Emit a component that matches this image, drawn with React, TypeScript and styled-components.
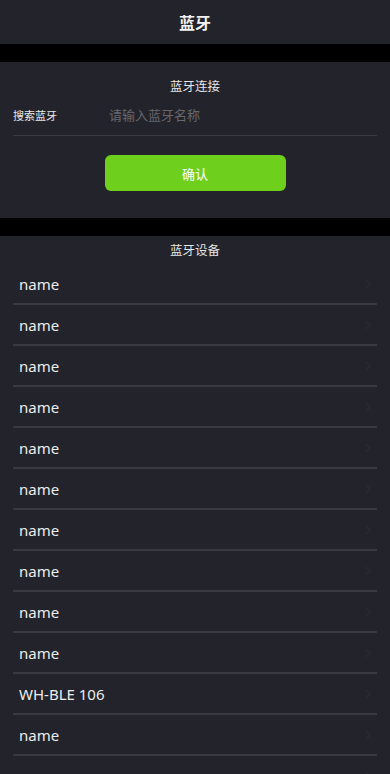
import React from 'react';
import styled, { createGlobalStyle } from 'styled-components';

const GlobalStyle = createGlobalStyle`
  html, body {
    margin: 0;
    padding: 0;
    background: #000;
  }
  body {
    font-family: "Noto Sans", "Noto Sans CJK SC", sans-serif;
    -webkit-font-smoothing: antialiased;
  }
`;

const Page = styled.div`
  width: 390px;
  height: 774px;
  overflow: hidden;
  background: #000;
  display: flex;
  flex-direction: column;
  gap: 18px;
`;

const Header = styled.header`
  height: 44px;
  flex-shrink: 0;
  background: #23242b;
  display: flex;
  align-items: center;
  justify-content: center;
  color: #f2f2f2;
  font-size: 16px;
  font-weight: 700;
  font-family: "Noto Sans CJK SC", sans-serif;
`;

const Panel = styled.section`
  background: #23242b;
  display: flex;
  flex-direction: column;
  padding: ${(p: { pad?: string }) => p.pad ?? '0'};
`;

const PanelTitle = styled.div`
  font-family: "Noto Sans CJK SC", sans-serif;
  font-size: 12.5px;
  color: #e6e6e6;
  text-align: center;
  line-height: ${(p: { lh?: string }) => p.lh ?? '16px'};
`;

const SearchRow = styled.label`
  margin: 0 13px;
  height: 41px;
  display: flex;
  align-items: center;
  border-bottom: 1.5px solid #3a3b42;
`;

const FieldLabel = styled.span`
  width: 96px;
  font-family: "Noto Sans CJK SC", sans-serif;
  font-size: 11px;
  color: #e8e8e8;
`;

const FieldInput = styled.input`
  flex: 1;
  border: none;
  outline: none;
  background: transparent;
  font-family: "Noto Sans CJK SC", sans-serif;
  font-size: 13px;
  color: #eee;
  padding: 0;
  &::placeholder {
    color: #66676e;
  }
`;

const ConfirmButton = styled.button`
  align-self: center;
  margin-top: 19px;
  width: 181px;
  height: 36px;
  border: none;
  border-radius: 6px;
  background: #6fcf1d;
  color: #eef8e6;
  font-family: "Noto Sans CJK SC", sans-serif;
  font-size: 13px;
  font-weight: 500;
`;

const DeviceList = styled.ul`
  list-style: none;
  margin: 0;
  padding: 0 13px;
`;

const DeviceItem = styled.li`
  height: 39px;
  display: flex;
  align-items: center;
  justify-content: space-between;
  border-bottom: 2px solid #393a41;
  padding-left: 6px;
  font-size: 15px;
  color: #ececec;
`;

const Chevron = () => (
  <svg width="6" height="10" viewBox="0 0 6 10" style={{ marginRight: 6 }}>
    <path d="M1 1l4 4-4 4" fill="none" stroke="#2a2b32" strokeWidth="1.4" />
  </svg>
);

const devices = [
  'name', 'name', 'name', 'name', 'name', 'name', 'name', 'name',
  'name', 'name', 'WH-BLE 106', 'name', 'name',
];

export default function App() {
  return (
    <>
      <GlobalStyle />
      <Page>
        <Header>蓝牙</Header>
        <Panel pad="16px 0 27px">
          <PanelTitle>蓝牙连接</PanelTitle>
          <SearchRow>
            <FieldLabel>搜索蓝牙</FieldLabel>
            <FieldInput placeholder="请输入蓝牙名称" />
          </SearchRow>
          <ConfirmButton>确认</ConfirmButton>
        </Panel>
        <Panel>
          <PanelTitle lh="28px">蓝牙设备</PanelTitle>
          <DeviceList>
            {devices.map((d, i) => (
              <DeviceItem key={i}>
                {d}
                <Chevron />
              </DeviceItem>
            ))}
          </DeviceList>
        </Panel>
      </Page>
    </>
  );
}
